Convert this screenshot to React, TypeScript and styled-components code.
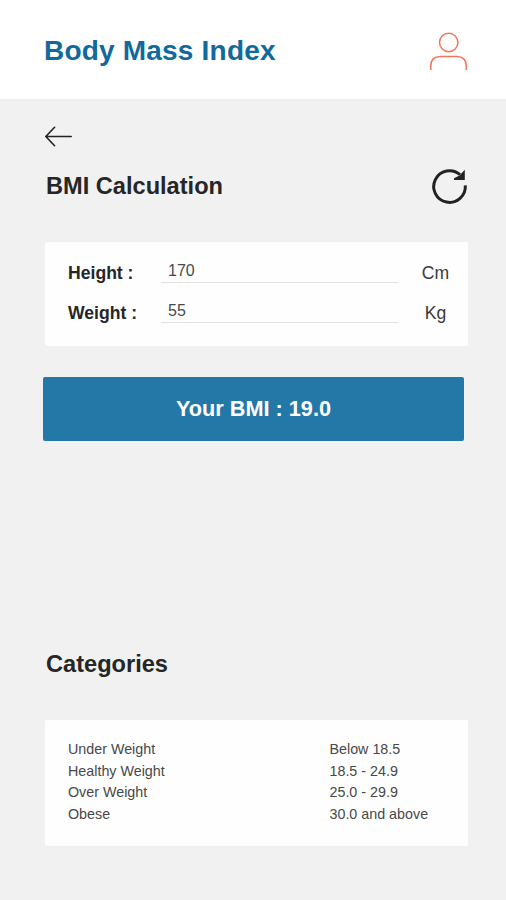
import React, { useState } from "react";
import styled, { createGlobalStyle } from "styled-components";

const GlobalStyle = createGlobalStyle`
  * { box-sizing: border-box; }
  body {
    margin: 0;
    background: #f1f1f1;
    font-family: "Liberation Sans", Helvetica, Arial, sans-serif;
    color: #262626;
  }
`;

const Screen = styled.div`
  width: 506px;
  height: 900px;
  display: flex;
  flex-direction: column;
  background: #f1f1f1;
  overflow: hidden;
`;

const Header = styled.header`
  flex: none;
  height: 99px;
  padding: 0 38px 0 44px;
  display: flex;
  align-items: flex-start;
  justify-content: space-between;
  background: #fff;
`;

const Title = styled.h1`
  margin: 35px 0 0;
  font-size: 28px;
  line-height: 32px;
  letter-spacing: 0.2px;
  color: #12699b;
`;

const IconButton = styled.button<{ $top: number }>`
  margin: ${(p) => p.$top}px 0 0;
  padding: 0;
  border: 0;
  background: none;
  line-height: 0;
`;

const Content = styled.main`
  flex: 1;
  display: flex;
  flex-direction: column;
  padding: 25px 38px 0 45px;
`;

const SectionBar = styled.div`
  height: 44px;
  margin-top: 15px;
  display: flex;
  align-items: flex-start;
  justify-content: space-between;
`;

const SectionTitle = styled.h2<{ $top: number }>`
  margin: ${(p) => p.$top}px 0 0 1px;
  font-size: 23.6px;
  line-height: 28px;
`;

const Card = styled.section`
  background: #fefefe;
  border-radius: 2px;
`;

const FormCard = styled(Card)`
  height: 104px;
  margin-top: 35px;
  padding: 11px 18px 0 23px;
`;

const Field = styled.label`
  height: 40px;
  display: grid;
  grid-template-columns: 93px 237px 1fr;
  font-size: 17.6px;
`;

const FieldName = styled.span`
  font-weight: 700;
  line-height: 41px;
`;

const FieldInput = styled.input`
  height: 30px;
  width: 237px;
  padding: 6px 6px 0 7px;
  border: 0;
  border-bottom: 1px solid #e2e2e2;
  outline: 0;
  background: transparent;
  font: 16px "Liberation Sans", Helvetica, Arial, sans-serif;
  color: #4a4a4a;
`;

const Unit = styled.span`
  width: 75px;
  text-align: center;
  line-height: 41px;
  color: #3a3a3a;
`;

const Result = styled.output`
  width: 421px;
  height: 64px;
  margin: 31px 0 0 -2px;
  display: flex;
  align-items: center;
  justify-content: center;
  background: #2478a8;
  border-radius: 2px;
  color: #fff;
  font-size: 21.7px;
  font-weight: 700;
`;

const TableCard = styled(Card)`
  height: 126px;
  margin-top: 42px;
  padding: 19px 23px 0;
`;

const Category = styled.div`
  display: grid;
  grid-template-columns: 261.5px 1fr;
  font-size: 14.3px;
  line-height: 21.7px;
  color: #484848;
`;

const categories = [
  ["Under Weight", "Below 18.5"],
  ["Healthy Weight", "18.5 - 24.9"],
  ["Over Weight", "25.0 - 29.9"],
  ["Obese", "30.0 and above"],
];

export default function App() {
  const [height, setHeight] = useState("170");
  const [weight, setWeight] = useState("55");
  const bmi = Number(weight) / (Number(height) / 100) ** 2;
  const reset = () => {
    setHeight("170");
    setWeight("55");
  };

  return (
    <Screen>
      <GlobalStyle />
      <Header>
        <Title>Body Mass Index</Title>
        <IconButton $top={31} aria-label="Profile">
          <svg width="40" height="42" viewBox="0 0 40 42" fill="none" stroke="#f0765c" strokeWidth="1.5" strokeLinecap="round">
            <circle cx="20.7" cy="11.5" r="9.2" />
            <path d="M2.8 38.5V35Q2.8 25.5 12.3 25.5H28.7Q38.2 25.5 38.2 35V38.5" />
          </svg>
        </IconButton>
      </Header>
      <Content>
        <IconButton $top={0} aria-label="Back" as="a">
          <svg width="28" height="24" viewBox="0 0 28 24" fill="none" stroke="#222" strokeWidth="1.6" strokeLinecap="round" strokeLinejoin="round">
            <path d="M26.2 12.5H0.8M9.6 3.3L0.8 12.5L9.6 21.7" />
          </svg>
        </IconButton>
        <SectionBar>
          <SectionTitle $top={9}>BMI Calculation</SectionTitle>
          <IconButton $top={3} aria-label="Reset" onClick={reset}>
            <svg width="38" height="40" viewBox="0 0 38 40">
              <path d="M35.3 19.4A15.8 15.8 0 1 1 30 8.7" fill="none" stroke="#222" strokeWidth="3" />
              <path d="M24 12.2L29.5 9.5L34.8 3.8V14H24Z" fill="#222" />
            </svg>
          </IconButton>
        </SectionBar>
        <FormCard>
          <Field>
            <FieldName>Height :</FieldName>
            <FieldInput value={height} onChange={(e) => setHeight(e.target.value)} />
            <Unit>Cm</Unit>
          </Field>
          <Field>
            <FieldName>Weight :</FieldName>
            <FieldInput value={weight} onChange={(e) => setWeight(e.target.value)} />
            <Unit>Kg</Unit>
          </Field>
        </FormCard>
        <Result>Your BMI : {bmi.toFixed(1)}</Result>
        <SectionTitle $top={209}>Categories</SectionTitle>
        <TableCard>
          {categories.map(([name, range]) => (
            <Category key={name}>
              <span>{name}</span>
              <span>{range}</span>
            </Category>
          ))}
        </TableCard>
      </Content>
    </Screen>
  );
}
